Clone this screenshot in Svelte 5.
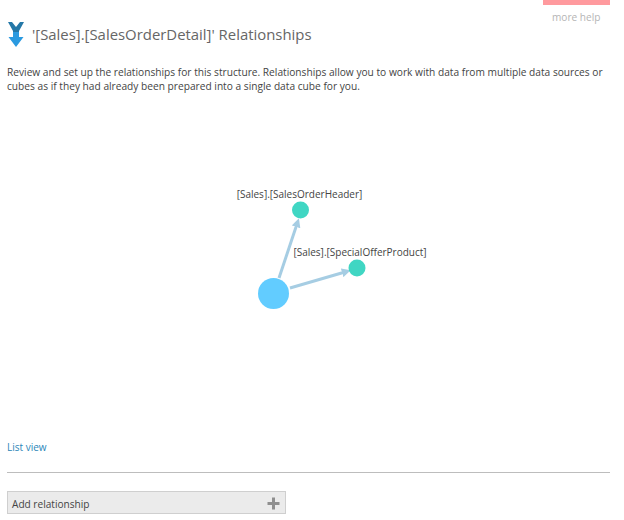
<script lang="ts">
  const nodes = [
    { x: 300.5, y: 210, r: 8.5, fill: '#40d6c3', label: '[Sales].[SalesOrderHeader]', lx: 299.5, ly: 194 },
    { x: 357, y: 268, r: 8.5, fill: '#40d6c3', label: '[Sales].[SpecialOfferProduct]', lx: 360, ly: 252 },
    { x: 273.5, y: 293.5, r: 15.5, fill: '#62ccff' }
  ]
  const links = [
    { x1: 279, y1: 278, x2: 297, y2: 224 },
    { x1: 290, y1: 288, x2: 345, y2: 272 }
  ]
</script>

<div class="page">
  <div class="help-tab"></div>
  <div class="help-link">more help</div>

  <header class="head">
    <svg class="logo" width="18" height="26" viewBox="0 0 18 26" aria-hidden="true">
      <path d="M1 0 L5 0 L9 5 L13 0 L17 0 L12 9 L12 14 L6 14 L6 9 Z" fill="#2478a8"/>
      <path d="M6 10 H12 V15 H16.5 L9 25 L1.5 15 H6 Z" fill="#2b9ae0"/>
    </svg>
    <h1>'[Sales].[SalesOrderDetail]' Relationships</h1>
  </header>

  <p class="intro">Review and set up the relationships for this structure. Relationships allow you to work with data from multiple data sources or cubes as if they had already been prepared into a single data cube for you.</p>

  <div class="graph">
    <svg width="624" height="347" viewBox="0 93 624 347" aria-hidden="true">
      <defs>
        <marker id="arrow" markerWidth="3" markerHeight="3" refX="1" refY="1.5" orient="auto">
          <path d="M0 0 L3 1.5 L0 3 Z" fill="#a6cde3"/>
        </marker>
      </defs>
      {#each links as l}
        <line x1={l.x1} y1={l.y1} x2={l.x2} y2={l.y2} stroke="#a6cde3" stroke-width="3" marker-end="url(#arrow)"/>
      {/each}
      {#each nodes as n}
        <circle cx={n.x} cy={n.y} r={n.r} fill={n.fill}/>
        {#if n.label}
          <text class="node-label" x={n.lx} y={n.ly + 4} text-anchor="middle">{n.label}</text>
        {/if}
      {/each}
    </svg>
  </div>

  <a class="list-view" href="#list">List view</a>
  <hr />
  <button class="add" type="button">
    <span>Add relationship</span>
    <svg width="13" height="13" viewBox="0 0 13 13" aria-hidden="true">
      <path d="M5 0.5 H8 V5 H12.5 V8 H8 V12.5 H5 V8 H0.5 V5 H5 Z" fill="#8f8f8f"/>
    </svg>
  </button>
</div>

<style>
  :global(body) {
    margin: 0;
    background: #fff;
  }

  .page {
    position: relative;
    width: 624px;
    height: 520px;
    overflow: hidden;
    font-family: "Open Sans", "Noto Sans", sans-serif;
    color: #444;
  }

  .help-tab {
    position: absolute;
    top: 0;
    left: 543px;
    width: 67px;
    height: 5px;
    background: #ff9a9e;
  }

  .help-link {
    position: absolute;
    top: 10px;
    left: 552px;
    font-size: 10.1px;
    line-height: 14px;
    color: #b5b5b5;
  }

  .head {
    display: flex;
    align-items: center;
    gap: 7px;
    padding: 22px 0 0 7px;
    height: 26px;
  }

  h1 {
    margin: -2px 0 0;
    font-size: 14.9px;
    font-weight: 400;
    line-height: 26px;
    color: #666;
    white-space: nowrap;
  }

  .intro {
    margin: 17px 0 0;
    padding: 0 7px;
    font-size: 10.19px;
    line-height: 14px;
    color: #444;
  }

  .graph {
    height: 347px;
  }

  .graph svg {
    display: block;
  }

  .node-label {
    font-size: 10px;
    fill: #444;
  }

  .list-view {
    display: block;
    margin: 0 0 0 7px;
    font-size: 10px;
    line-height: 14px;
    color: #2b86b8;
    text-decoration: none;
  }

  hr {
    margin: 18px 14px 0 7px;
    border: 0;
    border-top: 1px solid #bdbdbd;
  }

  .add {
    display: flex;
    align-items: center;
    justify-content: space-between;
    box-sizing: border-box;
    width: 279px;
    height: 23px;
    margin: 18px 0 0 7px;
    padding: 2px 5px 0 4px;
    border: 1px solid #cfcfcf;
    border-radius: 0;
    background: #ebebeb;
    font: inherit;
    font-size: 10.1px;
    color: #444;
  }
</style>
